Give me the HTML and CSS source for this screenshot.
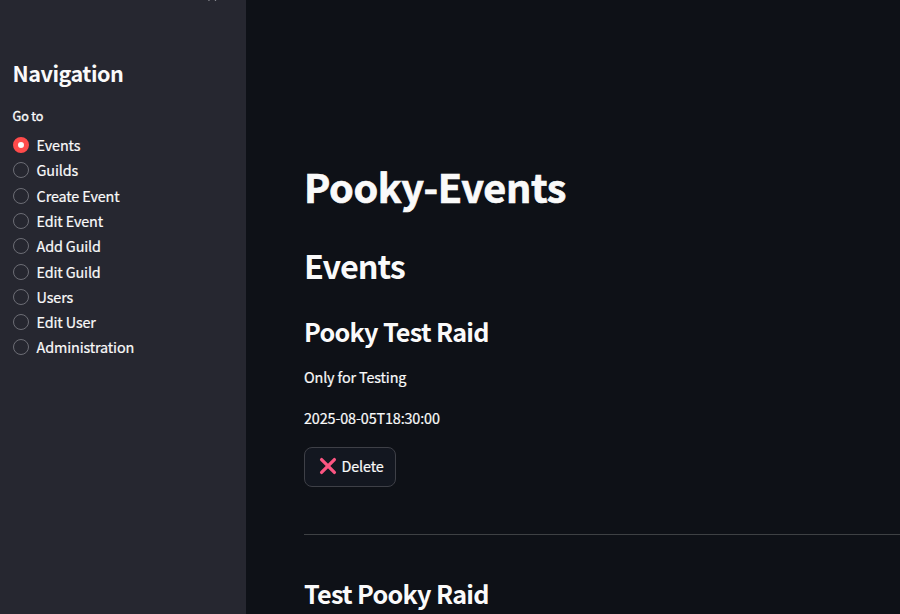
FILE: index.html
```html
<!DOCTYPE html>
<html lang="en">
<head>
    <meta charset="UTF-8">
    <meta name="viewport" content="width=device-width, initial-scale=1.0">
    <title>Pooky-Events</title>
    <link rel="stylesheet" href="styles.css">
</head>
<body>

    <!-- Sidebar -->
    <aside class="sidebar">
        <svg class="collapse-icon" width="12" height="4" viewBox="0 0 12 4">
            <path d="M4 -2L1.5 .5M10.5 -2L8 .5" fill="none" stroke="#a3a4aa" stroke-width="1.3"/>
        </svg>
        <h2 class="sidebar-title">Navigation</h2>
        <p class="radio-label">Go to</p>
        <form class="radio-group">
            <label><input type="radio" name="page" checked>Events</label>
            <label><input type="radio" name="page">Guilds</label>
            <label><input type="radio" name="page">Create Event</label>
            <label><input type="radio" name="page">Edit Event</label>
            <label><input type="radio" name="page">Add Guild</label>
            <label><input type="radio" name="page">Edit Guild</label>
            <label><input type="radio" name="page">Users</label>
            <label><input type="radio" name="page">Edit User</label>
            <label><input type="radio" name="page">Administration</label>
        </form>
    </aside>

    <!-- Main content -->
    <main class="content">
        <h1>Pooky-Events</h1>
        <h2>Events</h2>

        <section class="event">
            <h3>Pooky Test Raid</h3>
            <p>Only for Testing</p>
            <p>2025-08-05T18:30:00</p>
            <button type="button" class="delete-button">
                <svg width="18" height="18" viewBox="0 0 18 18">
                    <path d="M2.6 2.6L15.4 15.4M15.4 2.6L2.6 15.4" stroke="#fb5581" stroke-width="3.3" stroke-linecap="round"/>
                </svg>
                <span>Delete</span>
            </button>
        </section>

        <hr>

        <section class="event">
            <h3>Test Pooky Raid</h3>
        </section>
    </main>

</body>
</html>
```
FILE: styles.css
```css
body {
    display: flex;
    height: 100vh;
    margin: 0;
    overflow: hidden;
    background-color: #0e1117;
    color: #fafafa;
    font-family: "Noto Sans CJK SC", "Noto Sans", sans-serif;
    font-size: 14.4px;
    letter-spacing: -0.14px;
    -webkit-text-stroke: 0.2px;
}

h1, h2, h3, p {
    margin: 0;
}

h1, h2, h3 {
    -webkit-text-stroke: 0;
}

/* Sidebar */
.sidebar {
    box-sizing: border-box;
    flex: 0 0 246px;
    padding-left: 12.6px;
    background-color: #262730;
}

.collapse-icon {
    display: block;
    margin-left: 194px;
}

.sidebar-title {
    margin-top: 54px;
    font-size: 21.6px;
    font-weight: 600;
    line-height: 30px;
    letter-spacing: -0.5px;
}

.radio-label {
    margin-top: 18px;
    font-size: 12.6px;
    line-height: 20px;
    -webkit-text-stroke: 0.35px;
}

.radio-group {
    display: flex;
    flex-direction: column;
    margin-top: 6.4px;
}

.radio-group label {
    display: flex;
    align-items: center;
    gap: 8px;
    height: 25.3px;
    line-height: 24px;
}

.radio-group input {
    appearance: none;
    box-sizing: border-box;
    width: 16px;
    height: 16px;
    margin: 0;
    border: 1px solid #6c6d75;
    border-radius: 50%;
}

.radio-group input:checked {
    border: 5px solid #ff4b4b;
    background-color: #fafafa;
}

/* Main content */
.content {
    flex: 1;
    padding: 160px 0 0 58px;
}

.content h1 {
    font-size: 39.6px;
    font-weight: 700;
    line-height: 52px;
    letter-spacing: -0.4px;
    -webkit-text-stroke: 0.7px;
}

.content h2 {
    margin-top: 31px;
    font-size: 32.4px;
    font-weight: 600;
    line-height: 44px;
    letter-spacing: -1px;
}

.event h3 {
    font-size: 25.2px;
    font-weight: 600;
    line-height: 34px;
    letter-spacing: -0.7px;
}

.content h2 + .event {
    margin-top: 27px;
}

.event p {
    margin-top: 15px;
    line-height: 26px;
}

.event h3 + p {
    margin-top: 16px;
}

.delete-button {
    display: flex;
    align-items: center;
    gap: 5px;
    box-sizing: border-box;
    width: 92px;
    height: 40px;
    margin-top: 16px;
    padding: 0 0 0 13.5px;
    border: 1px solid #3e4047;
    border-radius: 8px;
    background-color: #131720;
    color: #fafafa;
    font: inherit;
    letter-spacing: inherit;
}

.delete-button svg {
    margin-bottom: 2px;
}

.delete-button span {
    padding-bottom: 3px;
}

hr {
    margin: 47px 0 41px;
    border: 0;
    border-top: 1px solid #3e4144;
}
```
